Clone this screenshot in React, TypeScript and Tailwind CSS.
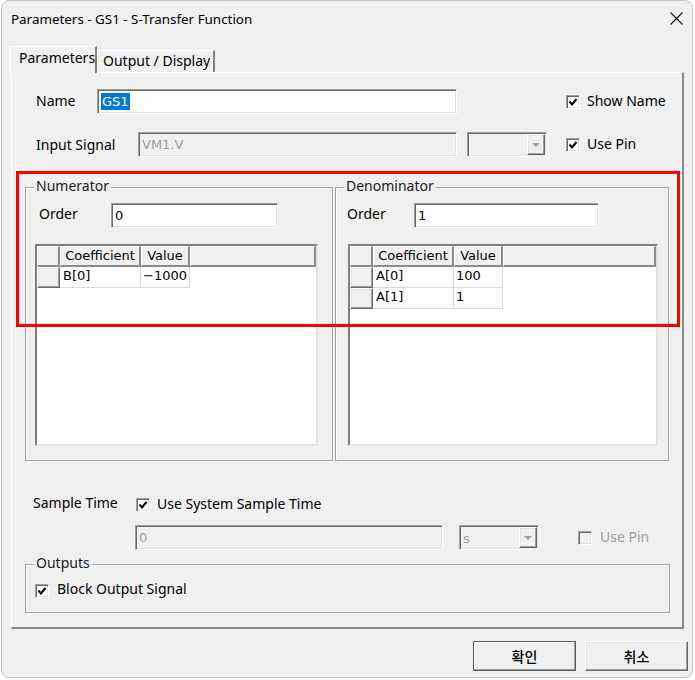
import React from "react";

const ui = "[font-family:'Noto_Sans','Noto_Sans_CJK_KR',sans-serif]";
const dv = "[font-family:'DejaVu_Sans',sans-serif]";
const sunken =
  "border border-t-[#a0a0a0] border-l-[#a0a0a0] border-r-white border-b-white shadow-[inset_1px_1px_0_#696969,inset_-1px_-1px_0_#e3e3e3]";
const raised =
  "border border-t-white border-l-white border-r-[#696969] border-b-[#696969] shadow-[inset_-1px_-1px_0_#a0a0a0,inset_1px_1px_0_#e3e3e3]";
const etched = "border border-[#a0a0a0] shadow-[inset_1px_1px_0_#fff,1px_1px_0_#fff]";

function Check({ disabled = false, checked = true }: { disabled?: boolean; checked?: boolean }) {
  return (
    <span
      className={`inline-flex w-[14px] h-[14px] shrink-0 items-center justify-center ${sunken} ${
        disabled ? "bg-[#f0f0f0]" : "bg-white"
      }`}
    >
      {checked && (
        <svg width="10" height="10" viewBox="0 0 10 10">
          <path d="M1.5 4.5 L4 7.5 L8.5 2" fill="none" stroke="#000" strokeWidth="2" />
        </svg>
      )}
    </span>
  );
}

function Field({ value, w, disabled = false, selected = false }: { value: string; w: string; disabled?: boolean; selected?: boolean }) {
  return (
    <div
      className={`flex items-center h-[25px] pl-[3px] ${w} ${sunken} ${disabled ? "bg-[#f0f0f0] text-[#a0a0a0]" : "bg-white text-black"} ${dv} text-[13px]`}
    >
      {selected ? <span className="bg-[#0078d7] text-white leading-[17px] px-px">{value}</span> : <span>{value}</span>}
    </div>
  );
}

function Combo({ value, w }: { value: string; w: string }) {
  return (
    <div className={`flex h-[25px] ${w} ${sunken} bg-[#f0f0f0] p-px`}>
      <span className={`flex-1 pl-[2px] pt-px text-[13px] text-[#a0a0a0] leading-[21px] ${dv}`}>{value}</span>
      <span className={`w-[18px] h-full flex items-center justify-center ${raised} bg-[#f0f0f0]`}>
        <svg width="8" height="4" viewBox="0 0 8 4">
          <path d="M0 0h8L4 4z" fill="#a0a0a0" />
        </svg>
      </span>
    </div>
  );
}

function Group({ label, className, children }: { label: string; className: string; children?: React.ReactNode }) {
  return (
    <div className={`relative ${etched} ${className}`}>
      <span className="absolute -top-[12px] left-[8px] bg-[#f0f0f0] px-[2px] text-[14px] leading-[20px] text-[#1a1a1a]">
        {label}
      </span>
      {children}
    </div>
  );
}

function Grid({ rows, w }: { rows: [string, string][]; w: string }) {
  const head = "h-[21px] bg-[#f0f0f0] border-r-2 border-b-2 border-r-[#8a8a8a] border-b-[#8a8a8a] border-t border-l border-t-white border-l-white";
  return (
    <div
      className={`${w} h-[202px] bg-white border-2 border-t-[#7f7f7f] border-l-[#7f7f7f] border-r-[#e3e3e3] border-b-[#e3e3e3] ${dv} text-[13px] leading-[18px]`}
    >
      <div className="flex">
        <div className={`${head} w-[23px]`} />
        <div className={`${head} w-[81px] text-center`}>Coefficient</div>
        <div className={`${head} w-[49px] text-center`}>Value</div>
        <div className={`${head} flex-1`} />
      </div>
      {rows.map(([c, v]) => (
        <div key={c} className="flex">
          <div className={`h-[21px] w-[23px] bg-[#f0f0f0] ${raised}`} />
          <div className="h-[21px] w-[81px] pl-[3px] border-r border-b border-[#d9d9d9]">{c}</div>
          <div className="h-[21px] w-[49px] pl-[2px] border-r border-b border-[#d9d9d9]">{v}</div>
        </div>
      ))}
    </div>
  );
}

export default function App() {
  return (
    <div className={`relative w-[695px] h-[680px] bg-white overflow-hidden text-black ${ui}`}>
      <div className="ml-px w-[692px] h-[678px] rounded-[8px] border border-[#c4c4c4] bg-[#f0f0f0] flex flex-col">
        {/* title bar */}
        <div className="h-[34px] flex items-center justify-between pl-[9px] pr-[9px]">
          <span className="text-[13.4px] leading-[20px] pt-[1px]">Parameters - GS1 - S-Transfer Function</span>
          <svg width="13" height="13" viewBox="0 0 13 13" className="mt-[1px]">
            <path d="M0.5 0.5 L12.5 12.5 M12.5 0.5 L0.5 12.5" stroke="#1a1a1a" strokeWidth="1.2" />
          </svg>
        </div>

        {/* tabs */}
        <div className="mt-[11px] h-[26px] pl-[8px] flex items-end relative z-10 text-[14px]">
          <div className="h-[27px] -mb-px w-[87px] bg-[#f0f0f0] border-t border-l border-t-white border-l-white border-r-2 border-r-[#808080] pl-[8px] leading-[22px]">
            Parameters
          </div>
          <div className="h-[22px] w-[118px] border-t border-l border-t-white border-l-white border-r-2 border-r-[#808080] pl-[5px] leading-[20px]">
            Output / Display
          </div>
        </div>

        {/* tab panel */}
        <div className="ml-[9px] w-[673px] h-[557px] border-t border-l border-t-white border-l-white border-r-2 border-b-2 border-r-[#8a8a8a] border-b-[#8a8a8a] text-[14px] leading-[18px]">
          <div className="mt-[16px] pl-[24px] flex items-center h-[25px]">
            <span className="w-[61px] -mt-px">Name</span>
            <Field value="GS1" w="w-[360px]" selected />
            <span className="ml-[109px] flex items-center gap-[7px]">
              <Check />
              <span className="-mt-[2px]">Show Name</span>
            </span>
          </div>

          <div className="mt-[18px] pl-[24px] flex items-center h-[25px]">
            <span className="w-[102px]">Input Signal</span>
            <Field value="VM1.V" w="w-[319px]" disabled />
            <div className="ml-[10px]">
              <Combo value="" w="w-[80px]" />
            </div>
            <span className="ml-[19px] flex items-center gap-[7px]">
              <Check />
              <span className="-mt-px">Use Pin</span>
            </span>
          </div>

          <div className="mt-[30px] pl-[13px] flex">
            <Group label="Numerator" className="w-[308px] h-[274px]">
              <div className="mt-[15px] pl-[13px] flex items-center">
                <span className="w-[72px] -mt-[3px]">Order</span>
                <Field value="0" w="w-[167px]" />
              </div>
              <div className="mt-[16px] ml-[9px]">
                <Grid w="w-[283px]" rows={[["B[0]", "−1000"]]} />
              </div>
            </Group>
            <Group label="Denominator" className="ml-[2px] w-[334px] h-[274px]">
              <div className="mt-[15px] pl-[11px] flex items-center">
                <span className="w-[67px] -mt-[3px]">Order</span>
                <Field value="1" w="w-[185px]" />
              </div>
              <div className="mt-[16px] ml-[12px]">
                <Grid
                  w="w-[310px]"
                  rows={[
                    ["A[0]", "100"],
                    ["A[1]", "1"],
                  ]}
                />
              </div>
            </Group>
          </div>

          <div className="mt-[35px] pl-[21px] flex items-center h-[18px]">
            <span className="w-[103px] -mt-[4px]">Sample Time</span>
            <span className="flex items-center gap-[7px]">
              <Check />
              <span className="-mt-[2px]">Use System Sample Time</span>
            </span>
          </div>

          <div className="mt-[11px] pl-[123px] flex items-center h-[25px]">
            <Field value="0" w="w-[308px]" disabled />
            <div className="ml-[16px]">
              <Combo value="s" w="w-[80px]" />
            </div>
            <span className="ml-[39px] flex items-center gap-[8px] text-[#a0a0a0]">
              <Check disabled checked={false} />
              <span className="-mt-px">Use Pin</span>
            </span>
          </div>

          <div className="mt-[14px] pl-[13px]">
            <Group label="Outputs" className="w-[645px] h-[49px]">
              <div className="mt-[18px] pl-[9px] flex items-center gap-[8px]">
                <Check />
                <span className="-mt-[3px]">Block Output Signal</span>
              </div>
            </Group>
          </div>
        </div>

        {/* buttons */}
        <div className="mt-[12px] flex justify-end gap-[9px] pr-[4px] text-[14px] font-medium">
          <button className={`w-[103px] h-[30px] bg-[#f0f0f0] border border-[#5a5a5a] shadow-[inset_-1px_-1px_0_#a0a0a0,inset_1px_1px_0_#fff]`}>
            확인
          </button>
          <button className={`w-[103px] h-[30px] bg-[#f0f0f0] ${raised}`}>취소</button>
        </div>
      </div>

      {/* annotation */}
      <div className="absolute left-[16px] top-[171px] w-[664px] h-[156px] border-[3px] border-[#ff0000] pointer-events-none" />
    </div>
  );
}
